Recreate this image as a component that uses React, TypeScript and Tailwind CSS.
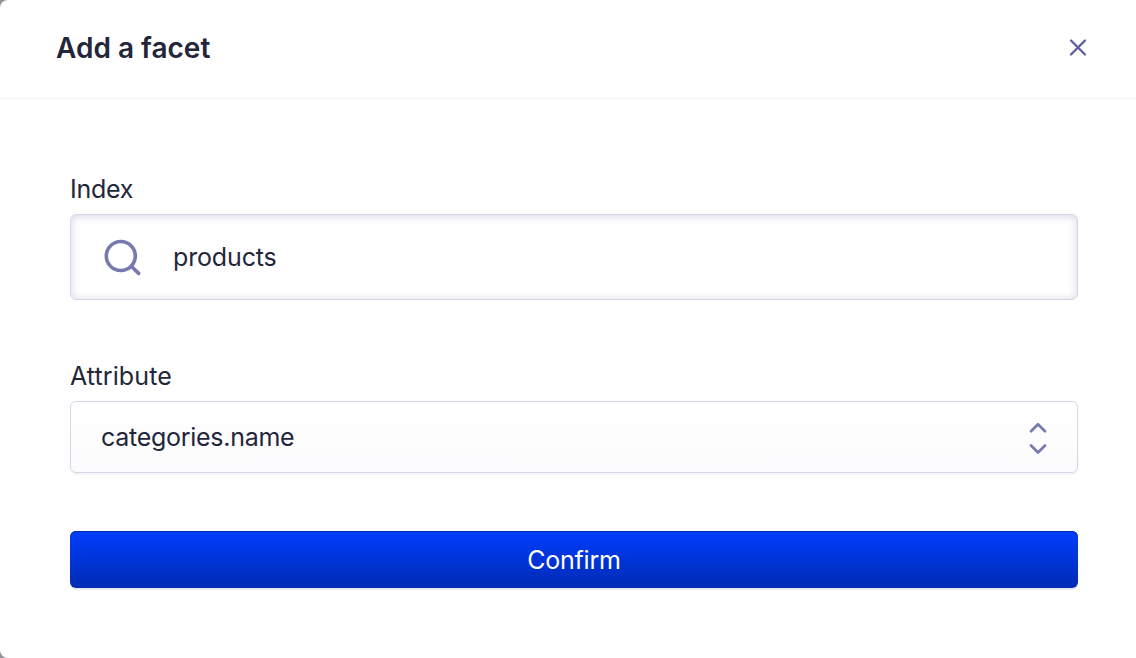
import { useState } from 'react';

function SearchIcon() {
  return (
    <svg className="w-10 h-10 flex-shrink-0" viewBox="0 0 40 40" fill="none" stroke="#777aaf" strokeWidth="3.6" strokeLinecap="round">
      <circle cx="18.8" cy="19" r="14.5" />
      <path d="M29.5 29.5 L36.7 36.4" />
    </svg>
  );
}

function CloseIcon() {
  return (
    <svg className="w-5 h-5" viewBox="0 0 20 20" fill="none" stroke="#5a5e9a" strokeWidth="2.3" strokeLinecap="round">
      <path d="M3 2.5 L17 16.5 M17 2.5 L3 16.5" />
    </svg>
  );
}

function SelectorIcon() {
  return (
    <svg className="w-5 h-9 flex-shrink-0" viewBox="0 0 20 36" fill="none" stroke="#777aaf" strokeWidth="2.7" strokeLinecap="round" strokeLinejoin="round">
      <path d="M3 12.3 L10 5.3 L17 12.3" />
      <path d="M3 26.5 L10 33.5 L17 26.5" />
    </svg>
  );
}

export default function App() {
  const [index, setIndex] = useState('products');
  const [attribute] = useState('categories.name');

  return (
    <div className="h-[658px] bg-[#93939b] overflow-hidden font-['Inter',sans-serif] text-[#23263b]">
      <div className="h-full bg-white rounded-l-[8px]">
        <header className="h-[99px] pl-14 pr-12 pb-0.5 flex items-center justify-between border-b border-[#f3f3f7]">
          <h2 className="text-[28px] leading-9 font-semibold">Add a facet</h2>
          <button aria-label="Close">
            <CloseIcon />
          </button>
        </header>

        <form className="pl-[70px] pr-[58px] pt-[72px]" onSubmit={(e) => e.preventDefault()}>
          <label htmlFor="index" className="block h-[43px] text-[25px] leading-[36px] tracking-[-0.25px]">
            Index
          </label>
          <div className="h-[86px] pl-[31px] flex items-center gap-[31px] bg-white border border-[#d6d6e7] rounded-[6px] shadow-[inset_0_1px_8px_rgba(119,122,175,0.32)]">
            <SearchIcon />
            <input
              id="index"
              value={index}
              onChange={(e) => setIndex(e.target.value)}
              className="flex-1 text-[25px] leading-9 tracking-[-0.15px] bg-transparent outline-none"
            />
          </div>

          <label htmlFor="attribute" className="block h-[43px] mt-[58px] text-[25px] leading-[36px] tracking-[0.1px]">
            Attribute
          </label>
          <button
            id="attribute"
            type="button"
            className="w-full h-[72px] pl-[30px] pr-[29px] flex items-center justify-between text-[25px] leading-9 tracking-[-0.28px] bg-linear-to-b from-white to-[#fbfbfd] border border-[#d6d6e7] rounded-[6px] shadow-[0_2px_1px_rgba(35,38,59,0.05)]"
          >
            <span>{attribute}</span>
            <SelectorIcon />
          </button>

          <button
            type="submit"
            className="w-full h-[57px] mt-[58px] flex items-center justify-center text-[25px] leading-9 tracking-[-0.25px] text-white bg-linear-to-b from-[#003dff] to-[#002bb3] rounded-[6px] shadow-[inset_0_1px_0_#0029ad,0_2px_1px_rgba(35,38,59,0.1)]"
          >
            Confirm
          </button>
        </form>
      </div>
    </div>
  );
}
